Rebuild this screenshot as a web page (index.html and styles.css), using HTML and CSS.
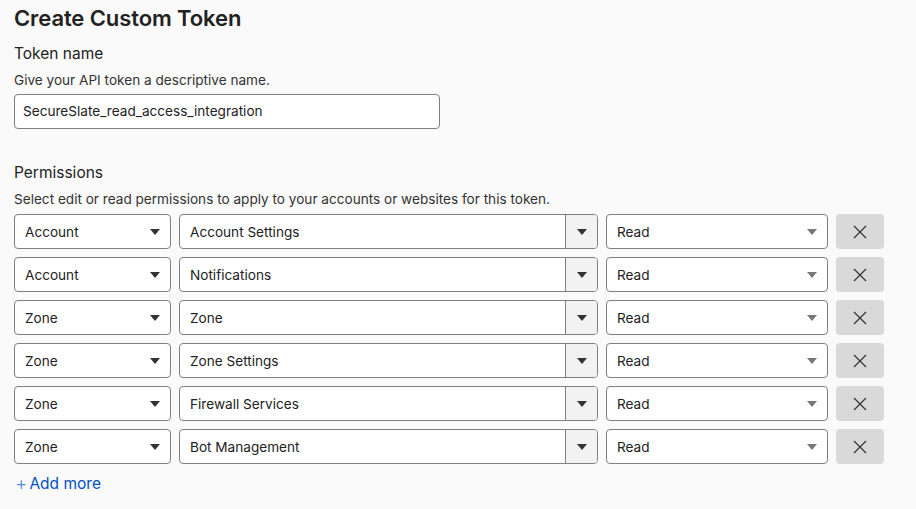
FILE: index.html
```html
<!DOCTYPE html>
<html>
<head>
<meta charset="utf-8">
<link rel="stylesheet" href="styles.css">
</head>
<body>
<div class="page">
  <h1 class="title">Create Custom Token</h1>
  <h2 class="label">Token name</h2>
  <p class="help">Give your API token a descriptive name.</p>
  <div class="text-input">SecureSlate_read_access_integration</div>

  <h2 class="label perm-label">Permissions</h2>
  <p class="help">Select edit or read permissions to apply to your accounts or websites for this token.</p>

  <div class="rows">
    <div class="row">
      <div class="sel sel-scope">Account<span class="caret"></span></div>
      <div class="combo"><span class="combo-text">Account Settings</span><span class="combo-btn"><span class="caret"></span></span></div>
      <div class="sel sel-level">Read<span class="caret light"></span></div>
      <button class="remove"><svg width="16" height="16" viewBox="0 0 16 16"><path d="M2 2 L14 14 M14 2 L2 14" stroke="#333" stroke-width="1.2" fill="none"/></svg></button>
    </div>
    <div class="row">
      <div class="sel sel-scope">Account<span class="caret"></span></div>
      <div class="combo"><span class="combo-text">Notifications</span><span class="combo-btn"><span class="caret"></span></span></div>
      <div class="sel sel-level">Read<span class="caret light"></span></div>
      <button class="remove"><svg width="16" height="16" viewBox="0 0 16 16"><path d="M2 2 L14 14 M14 2 L2 14" stroke="#333" stroke-width="1.2" fill="none"/></svg></button>
    </div>
    <div class="row">
      <div class="sel sel-scope">Zone<span class="caret"></span></div>
      <div class="combo"><span class="combo-text">Zone</span><span class="combo-btn"><span class="caret"></span></span></div>
      <div class="sel sel-level">Read<span class="caret light"></span></div>
      <button class="remove"><svg width="16" height="16" viewBox="0 0 16 16"><path d="M2 2 L14 14 M14 2 L2 14" stroke="#333" stroke-width="1.2" fill="none"/></svg></button>
    </div>
    <div class="row">
      <div class="sel sel-scope">Zone<span class="caret"></span></div>
      <div class="combo"><span class="combo-text">Zone Settings</span><span class="combo-btn"><span class="caret"></span></span></div>
      <div class="sel sel-level">Read<span class="caret light"></span></div>
      <button class="remove"><svg width="16" height="16" viewBox="0 0 16 16"><path d="M2 2 L14 14 M14 2 L2 14" stroke="#333" stroke-width="1.2" fill="none"/></svg></button>
    </div>
    <div class="row">
      <div class="sel sel-scope">Zone<span class="caret"></span></div>
      <div class="combo"><span class="combo-text">Firewall Services</span><span class="combo-btn"><span class="caret"></span></span></div>
      <div class="sel sel-level">Read<span class="caret light"></span></div>
      <button class="remove"><svg width="16" height="16" viewBox="0 0 16 16"><path d="M2 2 L14 14 M14 2 L2 14" stroke="#333" stroke-width="1.2" fill="none"/></svg></button>
    </div>
    <div class="row">
      <div class="sel sel-scope">Zone<span class="caret"></span></div>
      <div class="combo"><span class="combo-text">Bot Management</span><span class="combo-btn"><span class="caret"></span></span></div>
      <div class="sel sel-level">Read<span class="caret light"></span></div>
      <button class="remove"><svg width="16" height="16" viewBox="0 0 16 16"><path d="M2 2 L14 14 M14 2 L2 14" stroke="#333" stroke-width="1.2" fill="none"/></svg></button>
    </div>
  </div>

  <a class="add-more"><span class="plus">+</span><span class="add-text">Add more</span></a>
</div>
</body>
</html>
```

FILE: styles.css
```css
* { box-sizing: border-box; }
html, body { margin: 0; padding: 0; background: #fafafa; }
body {
  font-family: Inter, "Noto Sans", sans-serif;
  color: #222;
  width: 916px;
  height: 509px;
  overflow: hidden;
}
.page { padding: 4px 14px 0 14px; }
.title {
  font-size: 22px;
  font-weight: 600;
  margin: 0;
  line-height: 28px;
  color: #222;
  letter-spacing: -0.1px;
}
.label {
  font-size: 15.5px;
  font-weight: 400;
  margin: 12px 0 0 0;
  line-height: 20px;
  color: #222;
}
.perm-label { margin-top: 34px; }
.help {
  font-size: 13.6px;
  margin: 7px 0 0 0;
  line-height: 18px;
  color: #333;
}
.text-input {
  margin-top: 5px;
  width: 426px;
  height: 35px;
  border: 1px solid #808080;
  border-radius: 4px;
  background: #fff;
  font-size: 13.6px;
  line-height: 33px;
  padding: 0 8px;
  color: #222;
}
.rows {
  margin-top: 6px;
  display: flex;
  flex-direction: column;
  gap: 8px;
}
.row {
  display: flex;
  gap: 8px;
  height: 35px;
}
.sel {
  display: flex;
  align-items: center;
  justify-content: space-between;
  height: 35px;
  border: 1px solid #808080;
  border-radius: 4px;
  background: #fff;
  font-size: 13.6px;
  color: #222;
  padding: 0 10px 0 10px;
}
.sel-scope { width: 157px; }
.sel-level { width: 222px; }
.caret {
  width: 0; height: 0;
  border-left: 5px solid transparent;
  border-right: 5px solid transparent;
  border-top: 6px solid #333;
}
.caret.light { border-top-color: #777; }
.combo {
  display: flex;
  width: 419px;
  height: 35px;
  border: 1px solid #808080;
  border-radius: 4px;
  background: #fff;
  overflow: hidden;
  font-size: 13.6px;
}
.combo-text {
  flex: 1;
  display: flex;
  align-items: center;
  padding-left: 10px;
  color: #222;
}
.combo-btn {
  width: 32px;
  display: flex;
  align-items: center;
  justify-content: center;
  background: #f2f2f2;
  border-left: 1px solid #808080;
}
.remove {
  width: 48px;
  height: 35px;
  border: none;
  border-radius: 4px;
  background: #d9d9d9;
  display: flex;
  align-items: center;
  justify-content: center;
  padding: 0;
}
.add-more {
  display: inline-flex;
  align-items: center;
  margin-top: 10px;
  font-size: 15.5px;
  line-height: 20px;
  color: #0051c3;
}
.plus { color: #5a88d6; font-weight: 300; font-size: 19px; margin-left: 1px; margin-right: 3px; }
.add-text { margin-left: -1px; }
```
